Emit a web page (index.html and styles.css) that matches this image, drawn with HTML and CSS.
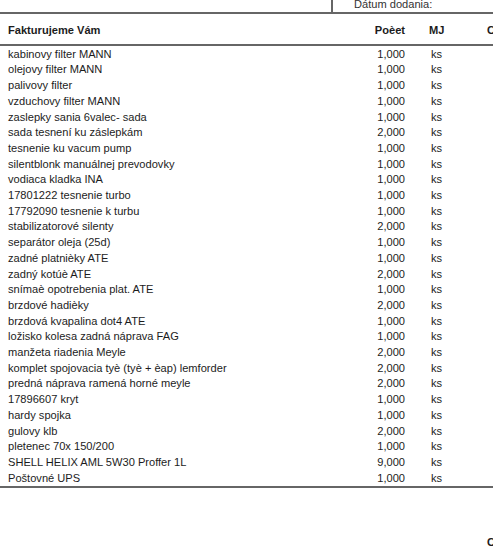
FILE: index.html
```html
<!DOCTYPE html>
<html lang="sk">
<head>
    <meta charset="UTF-8">
    <meta name="viewport" content="width=device-width, initial-scale=1.0">
    <title>Faktúra</title>
    <link rel="stylesheet" href="styles.css">
</head>
<body>
    <div class="sheet">
        <!-- Top strip with delivery date box -->
        <div class="top-strip">
            <div class="date-box">Dátum dodania:</div>
        </div>

        <!-- Table head -->
        <div class="row head">
            <div class="name">Fakturujeme Vám</div>
            <div class="qty">Poèet</div>
            <div class="unit">MJ</div>
            <div class="extra">C</div>
        </div>

        <!-- Items -->
        <div class="items">
            <div class="row"><div class="name">kabinovy filter MANN</div><div class="qty">1,000</div><div class="unit">ks</div></div>
            <div class="row"><div class="name">olejovy filter MANN</div><div class="qty">1,000</div><div class="unit">ks</div></div>
            <div class="row"><div class="name">palivovy filter</div><div class="qty">1,000</div><div class="unit">ks</div></div>
            <div class="row"><div class="name">vzduchovy filter MANN</div><div class="qty">1,000</div><div class="unit">ks</div></div>
            <div class="row"><div class="name">zaslepky sania 6valec- sada</div><div class="qty">1,000</div><div class="unit">ks</div></div>
            <div class="row"><div class="name">sada tesnení ku záslepkám</div><div class="qty">2,000</div><div class="unit">ks</div></div>
            <div class="row"><div class="name">tesnenie ku vacum pump</div><div class="qty">1,000</div><div class="unit">ks</div></div>
            <div class="row"><div class="name">silentblonk manuálnej prevodovky</div><div class="qty">1,000</div><div class="unit">ks</div></div>
            <div class="row"><div class="name">vodiaca kladka INA</div><div class="qty">1,000</div><div class="unit">ks</div></div>
            <div class="row"><div class="name">17801222 tesnenie turbo</div><div class="qty">1,000</div><div class="unit">ks</div></div>
            <div class="row"><div class="name">17792090 tesnenie k turbu</div><div class="qty">1,000</div><div class="unit">ks</div></div>
            <div class="row"><div class="name">stabilizatorové silenty</div><div class="qty">2,000</div><div class="unit">ks</div></div>
            <div class="row"><div class="name">separátor oleja (25d)</div><div class="qty">1,000</div><div class="unit">ks</div></div>
            <div class="row"><div class="name">zadné platnièky ATE</div><div class="qty">1,000</div><div class="unit">ks</div></div>
            <div class="row"><div class="name">zadný kotúè ATE</div><div class="qty">2,000</div><div class="unit">ks</div></div>
            <div class="row"><div class="name">snímaè opotrebenia plat. ATE</div><div class="qty">1,000</div><div class="unit">ks</div></div>
            <div class="row"><div class="name">brzdové hadièky</div><div class="qty">2,000</div><div class="unit">ks</div></div>
            <div class="row"><div class="name">brzdová kvapalina dot4 ATE</div><div class="qty">1,000</div><div class="unit">ks</div></div>
            <div class="row"><div class="name">ložisko kolesa zadná náprava FAG</div><div class="qty">1,000</div><div class="unit">ks</div></div>
            <div class="row"><div class="name">manžeta riadenia Meyle</div><div class="qty">2,000</div><div class="unit">ks</div></div>
            <div class="row"><div class="name">komplet spojovacia tyè (tyè + èap) lemforder</div><div class="qty">2,000</div><div class="unit">ks</div></div>
            <div class="row"><div class="name">predná náprava ramená horné meyle</div><div class="qty">2,000</div><div class="unit">ks</div></div>
            <div class="row"><div class="name">17896607 kryt</div><div class="qty">1,000</div><div class="unit">ks</div></div>
            <div class="row"><div class="name">hardy spojka</div><div class="qty">1,000</div><div class="unit">ks</div></div>
            <div class="row"><div class="name">gulovy klb</div><div class="qty">2,000</div><div class="unit">ks</div></div>
            <div class="row"><div class="name">pletenec 70x 150/200</div><div class="qty">1,000</div><div class="unit">ks</div></div>
            <div class="row"><div class="name">SHELL HELIX AML 5W30 Proffer 1L</div><div class="qty">9,000</div><div class="unit">ks</div></div>
            <div class="row"><div class="name">Poštovné UPS</div><div class="qty">1,000</div><div class="unit">ks</div></div>
        </div>

        <!-- Start of the next block, cut off by the window -->
        <div class="row tail">
            <div class="name"></div>
            <div class="qty"></div>
            <div class="unit"></div>
            <div class="extra">C</div>
        </div>
    </div>
</body>
</html>
```

FILE: styles.css
```css
/* Plain printed invoice look */
html, body {
    margin: 0;
    overflow: hidden;
    background: #fff;
}
body {
    font-family: "Liberation Sans", Arial, sans-serif;
    font-size: 11.1px;
    color: #1c1c1c;
}
.sheet {
    width: 560px;
}
.top-strip {
    height: 12px;
    border-bottom: 2px solid #666;
    display: flex;
    justify-content: flex-start;
    padding-left: 331px;
}
.date-box {
    border-left: 2px solid #666;
    padding-left: 21px;
    line-height: 13px;
    margin-top: -2px;
    color: #333;
}
.row {
    display: grid;
    grid-template-columns: 352px 45px 82px 60px;
    padding-left: 8px;
    line-height: 15.7px;
    white-space: nowrap;
}
.qty {
    text-align: right;
}
.unit {
    padding-left: 26px;
}
.head {
    font-weight: bold;
    padding-top: 9px;
    padding-bottom: 5px;
    border-bottom: 2px solid #666;
}
.head .unit {
    padding-left: 24px;
}
.items {
    padding-top: 1px;
    border-bottom: 2px solid #666;
}
.tail {
    font-weight: bold;
    margin-top: 47px;
}
```
